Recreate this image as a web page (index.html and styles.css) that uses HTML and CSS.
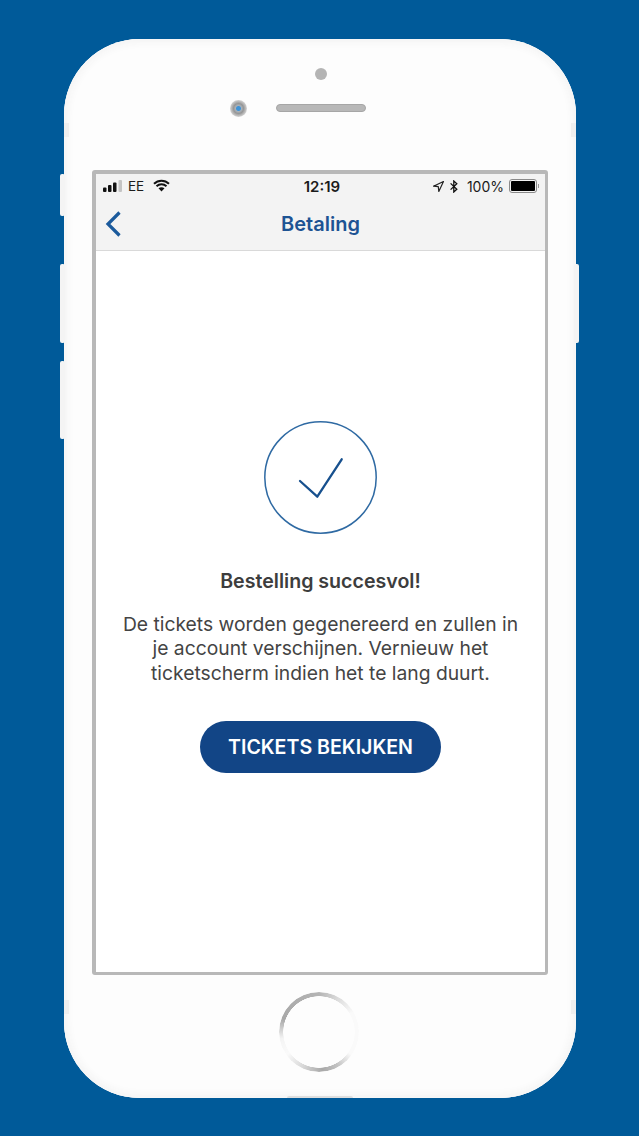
FILE: index.html
```html
<!DOCTYPE html>
<html lang="nl">
<head>
  <meta charset="UTF-8" />
  <meta name="viewport" content="width=device-width, initial-scale=1" />
  <title>Betaling</title>
  <link rel="stylesheet" href="styles.css">
</head>
<body>

  <div class="phone">
    <span class="side-btn side-mute"></span>
    <span class="side-btn side-up"></span>
    <span class="side-btn side-down"></span>
    <span class="side-btn side-power"></span>
    <span class="band band-tl"></span>
    <span class="band band-tr"></span>
    <span class="band band-bl"></span>
    <span class="band band-br"></span>

    <div class="phone-top">
      <span class="sensor"></span>
      <div class="ear-row">
        <span class="camera"></span>
        <span class="speaker"></span>
      </div>
    </div>

    <div class="screen">
      <!-- Statusbalk -->
      <div class="status-bar">
        <div class="status-left">
          <svg class="signal" width="20" height="12" viewBox="0 0 20 12">
            <rect x="0" y="7.500" width="3.500" height="4.500" rx="1" fill="#111"/>
            <rect x="5" y="5" width="3.500" height="7" rx="1" fill="#111"/>
            <rect x="10" y="2.500" width="3.500" height="9.500" rx="1" fill="#111"/>
            <rect x="15.500" y="0" width="3.500" height="12" rx="1" fill="#c4c4c4"/>
          </svg>
          <span>EE</span>
          <svg class="wifi" width="17" height="13" viewBox="0 0 17 13">
            <path d="M1 4.700C5.200 .6 11.800 .6 16 4.700M3.500 7.300C6.300 4.600 10.700 4.600 13.500 7.300" fill="none" stroke="#111" stroke-width="2"/>
            <path d="M5.500 9.300C7.200 7.800 9.800 7.800 11.500 9.300L8.500 12.500Z" fill="#111"/>
          </svg>
        </div>
        <div class="status-time">12:19</div>
        <div class="status-right">
          <svg width="11" height="11" viewBox="0 0 11 11">
            <path d="M10.500 .5L.5 5.200L5.300 5.700L5.800 10.500Z" fill="none" stroke="#222" stroke-width="1.200" stroke-linejoin="round"/>
          </svg>
          <svg class="bt" width="8" height="13" viewBox="0 0 8 13">
            <path d="M.6 3.400L6.800 9.300L3.800 12V1L6.800 3.700L.6 9.600" fill="none" stroke="#111" stroke-width="1.300"/>
          </svg>
          <span>100%</span>
          <span class="battery"><span class="battery-fill"></span></span>
        </div>
      </div>

      <!-- Navigatie -->
      <div class="nav-bar">
        <svg class="back" width="17" height="26" viewBox="0 0 17 26">
          <path d="M14.500 1.500L3 13L14.500 24.500" fill="none" stroke="#1b5a9c" stroke-width="3.200"/>
        </svg>
        <div class="nav-title">Betaling</div>
      </div>

      <div class="content">
        <svg class="check" width="113" height="113" viewBox="0 0 113 113">
          <circle cx="56.500" cy="56.500" r="55.700" fill="none" stroke="#2f6aa3" stroke-width="1.500"/>
          <path d="M36 60L53.300 75.700L77.700 38.300" fill="none" stroke="#17508e" stroke-width="2.300" stroke-linecap="round" stroke-linejoin="round"/>
        </svg>
        <h1 class="title">Bestelling succesvol!</h1>
        <p class="message">De tickets worden gegenereerd en zullen in<br>
          je account verschijnen. Vernieuw het<br>
          ticketscherm indien het te lang duurt.</p>
        <button class="btn-tickets">TICKETS BEKIJKEN</button>
      </div>
    </div>

    <div class="phone-bottom">
      <span class="home-ring"></span>
    </div>
    <span class="bottom-notch"></span>
  </div>

</body>
</html>
```

FILE: styles.css
```css
html, body {
  height: 100%;
}

body {
  margin: 0;
  padding: 39px 0 0 64px;
  box-sizing: border-box;
  background-color: #005a99;
  font-family: 'Inter', 'Liberation Sans', sans-serif;
  color: #3f3f3f;
  overflow: hidden;
}

.phone {
  position: relative;
  box-sizing: border-box;
  width: 512px;
  height: 1059px;
  padding: 0 28px;
  background-color: #fdfdfd;
  border-radius: 76px;
  box-shadow: inset 0 0 0 1px #f7f7f7, inset 0 0 8px 3px #f3f3f3;
  display: flex;
  flex-direction: column;
}

.side-btn {
  position: absolute;
  width: 5px;
  background-color: #f4f4f4;
  border-radius: 2px;
}

.side-mute { left: -4px; top: 135px; height: 42px; }
.side-up { left: -4px; top: 225px; height: 79px; }
.side-down { left: -4px; top: 322px; height: 78px; }
.side-power { right: -3px; top: 225px; height: 79px; }

.band {
  position: absolute;
  width: 5px;
  height: 14px;
  background-color: #efefef;
}

.band-tl { left: 0; top: 84px; }
.band-tr { right: 0; top: 84px; }
.band-bl { left: 0; top: 961px; }
.band-br { right: 0; top: 961px; }

.phone-top {
  height: 131px;
  display: flex;
  flex-direction: column;
  align-items: center;
  flex: none;
}

.sensor {
  width: 12px;
  height: 12px;
  margin-top: 29px;
  margin-left: 2px;
  border-radius: 50%;
  background-color: #b4b4b4;
}

.ear-row {
  position: relative;
  margin-top: 24px;
  margin-left: 2px;
  display: flex;
}

.speaker {
  width: 90px;
  height: 8px;
  box-sizing: border-box;
  border-radius: 4px;
  background-color: #b8b8b8;
  border: 1px solid #a6a6a6;
}

.camera {
  position: absolute;
  left: -46px;
  top: -4px;
  width: 17px;
  height: 17px;
  border-radius: 50%;
  background: radial-gradient(circle, #3d93d8 0 2px, #aab2ba 3px, #969696 5px, #d4d4d4 8.500px);
}

.screen {
  box-sizing: border-box;
  height: 805px;
  flex: none;
  border: solid #b8b8b8;
  border-width: 4px 3px 3px 4px;
  border-radius: 3px;
  background-color: #fff;
  display: flex;
  flex-direction: column;
}

.status-bar {
  height: 24px;
  flex: none;
  padding: 0 8px 0 7px;
  background-color: #f3f3f3;
  display: grid;
  grid-template-columns: 1fr auto 1fr;
  align-items: center;
  font-size: 14px;
  color: #1b1b1b;
}

.status-left {
  display: flex;
  align-items: center;
  gap: 5px;
  font-size: 13.500px;
}

.wifi {
  margin-left: 4px;
  margin-top: -1px;
}

.status-time {
  margin-left: 4px;
  font-weight: 600;
  font-size: 15px;
}

.status-right {
  display: flex;
  align-items: center;
  justify-content: flex-end;
  gap: 5px;
}

.bt {
  margin-left: 1px;
  margin-right: 4px;
}

.battery {
  position: relative;
  box-sizing: border-box;
  width: 28px;
  height: 14px;
  padding: 1px;
  border: 1px solid #8a8a8a;
  border-radius: 3px;
  display: flex;
}

.battery::after {
  content: "";
  position: absolute;
  right: -3px;
  top: 4px;
  width: 1.500px;
  height: 4px;
  background-color: #999;
}

.battery-fill {
  flex: 1;
  background-color: #000;
  border-radius: 1px;
}

.nav-bar {
  position: relative;
  height: 53px;
  flex: none;
  box-sizing: border-box;
  background-color: #f3f3f3;
  border-bottom: 1px solid #d9d9d9;
  display: flex;
  align-items: center;
  justify-content: center;
}

.back {
  position: absolute;
  left: 9px;
  top: 13px;
}

.nav-title {
  font-size: 20px;
  font-weight: 600;
  color: #1d5393;
  margin-top: -1px;
}

.content {
  flex: 1;
  padding-top: 170px;
  display: flex;
  flex-direction: column;
  align-items: center;
}

.check {
  display: block;
}

.title {
  margin: 35px 0 0;
  font-size: 19.600px;
  line-height: 24px;
  font-weight: 600;
  color: #3d3d3d;
}

.message {
  margin: 19px 0 0;
  font-size: 19.270px;
  line-height: 24.400px;
  text-align: center;
  color: #444;
}

.btn-tickets {
  width: 241px;
  height: 52px;
  margin-top: 36px;
  padding: 0;
  border: none;
  border-radius: 26px;
  background-color: #124586;
  color: #fff;
  font-family: inherit;
  font-size: 19.600px;
  font-weight: 600;
}

.phone-bottom {
  flex: 1;
  display: flex;
  justify-content: center;
  padding-top: 17px;
}

.home-ring {
  width: 80px;
  height: 80px;
  margin-left: -2px;
  box-sizing: border-box;
  border-radius: 50%;
  background: conic-gradient(from 0deg, #b4b4b4 0deg, #dcdcdc 30deg, #fafafa 60deg, #fafafa 125deg, #c4c4c4 150deg, #a8a8a8 175deg, #d8d8d8 205deg, #fafafa 235deg, #f4f4f4 260deg, #a8a8a8 290deg, #b4b4b4 360deg);
  -webkit-mask: radial-gradient(circle, transparent 35.500px, #000 36px);
  mask: radial-gradient(circle, transparent 35.500px, #000 36px);
}

.bottom-notch {
  position: absolute;
  left: 223px;
  bottom: 0;
  width: 66px;
  height: 2px;
  border-radius: 2px 2px 0 0;
  background-color: #dedede;
}
```
